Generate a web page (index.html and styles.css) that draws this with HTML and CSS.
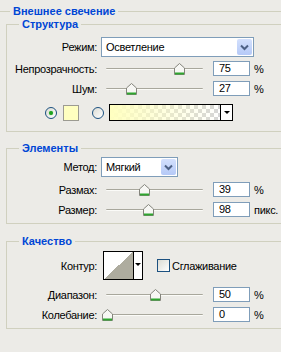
FILE: index.html
```html
<!DOCTYPE html>
<html lang="ru">
<head>
<meta charset="utf-8">
<title>Внешнее свечение</title>
<link rel="stylesheet" href="styles.css">
</head>
<body>
<fieldset class="outer">
  <legend class="legend-outer">Внешнее свечение</legend>

  <fieldset class="group group-structure">
    <legend>Структура</legend>
    <div class="row row-select row-first">
      <span class="label">Режим:</span>
      <div class="select select-wide">
        <span class="select-text">Осветление</span>
        <span class="select-btn"><svg width="15" height="16" viewBox="0 0 15 16"><path d="M4 6.5 L7.5 10 L11 6.5" fill="none" stroke="#4d6185" stroke-width="2"/></svg></span>
      </div>
    </div>
    <div class="row row-slider gap4">
      <span class="label">Непрозрачность:</span>
      <div class="slider">
        <div class="track"></div>
        <div class="rail"><svg class="thumb" style="left:75%" width="11" height="12" viewBox="0 0 11 12"><path d="M0.5 5 L5.5 0.5 L10.5 5 V11.5 H0.5 Z" fill="#f7f7f4" stroke="#84847c"/><rect x="1" y="9.5" width="9" height="2" fill="#2fa52f"/></svg></div>
      </div>
      <div class="num">75</div><span class="unit">%</span>
    </div>
    <div class="row row-slider gap5">
      <span class="label">Шум:</span>
      <div class="slider">
        <div class="track"></div>
        <div class="rail"><svg class="thumb" style="left:25%" width="11" height="12" viewBox="0 0 11 12"><path d="M0.5 5 L5.5 0.5 L10.5 5 V11.5 H0.5 Z" fill="#f7f7f4" stroke="#84847c"/><rect x="1" y="9.5" width="9" height="2" fill="#2fa52f"/></svg></div>
      </div>
      <div class="num">27</div><span class="unit">%</span>
    </div>
    <div class="row row-color">
      <span class="radio radio-on"></span>
      <span class="swatch"></span>
      <span class="radio radio-second"></span>
      <div class="gradient">
        <span class="gradient-fill"></span>
        <span class="gradient-btn"><span class="tri"></span></span>
      </div>
    </div>
  </fieldset>

  <fieldset class="group group-elements">
    <legend>Элементы</legend>
    <div class="row row-select row-method">
      <span class="label">Метод:</span>
      <div class="select select-narrow">
        <span class="select-text">Мягкий</span>
        <span class="select-btn"><svg width="15" height="16" viewBox="0 0 15 16"><path d="M4 6.5 L7.5 10 L11 6.5" fill="none" stroke="#4d6185" stroke-width="2"/></svg></span>
      </div>
    </div>
    <div class="row row-slider gap5">
      <span class="label">Размах:</span>
      <div class="slider">
        <div class="track"></div>
        <div class="rail"><svg class="thumb" style="left:39%" width="11" height="12" viewBox="0 0 11 12"><path d="M0.5 5 L5.5 0.5 L10.5 5 V11.5 H0.5 Z" fill="#f7f7f4" stroke="#84847c"/><rect x="1" y="9.5" width="9" height="2" fill="#2fa52f"/></svg></div>
      </div>
      <div class="num">39</div><span class="unit">%</span>
    </div>
    <div class="row row-slider gap5">
      <span class="label">Размер:</span>
      <div class="slider">
        <div class="track"></div>
        <div class="rail"><svg class="thumb" style="left:43%" width="11" height="12" viewBox="0 0 11 12"><path d="M0.5 5 L5.5 0.5 L10.5 5 V11.5 H0.5 Z" fill="#f7f7f4" stroke="#84847c"/><rect x="1" y="9.5" width="9" height="2" fill="#2fa52f"/></svg></div>
      </div>
      <div class="num">98</div><span class="unit">пикс.</span>
    </div>
  </fieldset>

  <fieldset class="group group-quality">
    <legend>Качество</legend>
    <div class="row row-contour">
      <span class="label">Контур:</span>
      <div class="contour">
        <span class="contour-swatch"></span>
        <span class="contour-btn"><span class="tri"></span></span>
      </div>
      <span class="checkbox"></span>
      <span class="check-label">Сглаживание</span>
    </div>
    <div class="row row-slider gap7">
      <span class="label">Диапазон:</span>
      <div class="slider">
        <div class="track"></div>
        <div class="rail"><svg class="thumb" style="left:50%" width="11" height="12" viewBox="0 0 11 12"><path d="M0.5 5 L5.5 0.5 L10.5 5 V11.5 H0.5 Z" fill="#f7f7f4" stroke="#84847c"/><rect x="1" y="9.5" width="9" height="2" fill="#2fa52f"/></svg></div>
      </div>
      <div class="num">50</div><span class="unit">%</span>
    </div>
    <div class="row row-slider gap5">
      <span class="label">Колебание:</span>
      <div class="slider">
        <div class="track"></div>
        <div class="rail"><svg class="thumb" style="left:0%" width="11" height="12" viewBox="0 0 11 12"><path d="M0.5 5 L5.5 0.5 L10.5 5 V11.5 H0.5 Z" fill="#f7f7f4" stroke="#84847c"/><rect x="1" y="9.5" width="9" height="2" fill="#2fa52f"/></svg></div>
      </div>
      <div class="num">0</div><span class="unit">%</span>
    </div>
  </fieldset>
</fieldset>
</body>
</html>
```

FILE: styles.css
```css
html, body {
  margin: 0;
  padding: 0;
}
body {
  background: #ecebe7;
  width: 281px;
  height: 352px;
  overflow: hidden;
  font-family: "Liberation Sans", Arial, sans-serif;
  font-size: 11px;
  letter-spacing: -0.3px;
  color: #000;
}
fieldset {
  margin: 0;
  padding: 0;
  min-width: 0;
  border: 1px solid #d0d0bf;
}
legend {
  padding: 0 3px;
  font-weight: bold;
  font-size: 11px;
  line-height: 13px;
  letter-spacing: 0;
  color: #0046d5;
  margin-left: 12px;
}
.outer {
  margin: 5px 0 0 0;
  border-left: none;
  border-right: none;
  border-bottom: none;
}
.outer > .legend-outer {
  margin-left: 10px;
}
.group {
  margin-left: 6px;
  border-right: none;
}
.group-structure { padding-bottom: 10px; }
.group-elements { margin-top: 10px; padding-bottom: 6px; }
.group-quality { margin-top: 11px; padding-bottom: 6px; }

.row {
  display: flex;
  align-items: center;
}
.label {
  flex: none;
  width: 90px;
  text-align: right;
  white-space: nowrap;
}
.row-select { height: 20px; }
.row-first { margin-top: 6px; }
.row-method { margin-top: 2px; }
.row-slider { height: 15px; }
.gap4 { margin-top: 4px; }
.gap5 { margin-top: 5px; }
.gap7 { margin-top: 7px; }

/* select */
.select {
  box-sizing: border-box;
  height: 20px;
  margin-left: 4px;
  border: 1px solid #7f9db9;
  background: #fff;
  display: flex;
  align-items: center;
}
.select-wide { width: 153px; }
.select-narrow { width: 77px; }
.select-text {
  flex: 1;
  padding-left: 4px;
  white-space: nowrap;
  overflow: hidden;
}
.select-btn {
  flex: none;
  width: 15px;
  height: 16px;
  margin-right: 1px;
  border-radius: 2px;
  background: linear-gradient(to bottom, #d3e0fd, #b5c9f7);
  display: flex;
}

/* slider */
.slider {
  position: relative;
  flex: none;
  width: 112px;
  height: 15px;
  margin-left: 4px;
}
.track {
  margin: 7px 0 0 5px;
  width: 97px;
  height: 1px;
  border-top: 1px solid #a8a79c;
  border-radius: 1px;
  background: #fbfbf8;
}
.rail {
  position: absolute;
  left: 6px;
  top: 0;
  width: 96px;
  height: 15px;
}
.thumb {
  position: absolute;
  top: 2px;
  margin-left: -5px;
}
.num {
  flex: none;
  box-sizing: border-box;
  width: 37px;
  height: 15px;
  border: 1px solid #7f9db9;
  background: #fff;
  padding-left: 5px;
  line-height: 13px;
}
.unit {
  margin-left: 4px;
  white-space: nowrap;
}

/* colour row */
.row-color {
  margin-top: 8px;
  height: 17px;
  padding-left: 38px;
}
.radio {
  flex: none;
  box-sizing: border-box;
  width: 12px;
  height: 12px;
  border: 1px solid #1c5180;
  border-radius: 50%;
  background: linear-gradient(135deg, #dcdcd4, #ffffff);
  display: flex;
  align-items: center;
  justify-content: center;
}
.radio-on::after {
  content: "";
  width: 4px;
  height: 4px;
  border-radius: 50%;
  background: #21a121;
  box-shadow: 0 0 1px #5fd15f;
}
.radio-second { margin-left: 13px; }
.swatch {
  flex: none;
  box-sizing: border-box;
  width: 16px;
  height: 16px;
  margin-left: 6px;
  border: 1px solid #9c9b92;
  background: #ffffc0;
}
.gradient {
  flex: none;
  box-sizing: border-box;
  width: 124px;
  height: 17px;
  margin-left: 5px;
  border: 1px solid #000;
  display: flex;
}
.gradient-fill {
  flex: 1;
  background:
    linear-gradient(to right, #ffffc0, rgba(255, 255, 192, 0)),
    conic-gradient(#d6d6d6 25%, #fff 0 50%, #d6d6d6 0 75%, #fff 0) 0 0 / 8px 8px;
}
.gradient-btn {
  flex: none;
  width: 11px;
  border-left: 1px solid #000;
  background: #fff;
  display: flex;
  align-items: center;
  justify-content: center;
}
.tri {
  width: 0;
  height: 0;
  border-left: 3px solid transparent;
  border-right: 3px solid transparent;
  border-top: 3px solid #000;
}

/* contour row */
.row-contour {
  margin-top: 3px;
  height: 29px;
}
.contour {
  flex: none;
  box-sizing: border-box;
  width: 40px;
  height: 29px;
  margin-left: 6px;
  border: 1px solid #000;
  display: flex;
}
.contour-swatch {
  flex: none;
  width: 29px;
  background: linear-gradient(to bottom right, #fff 50%, #aeac9f 50%);
}
.contour-btn {
  flex: 1;
  border-left: 1px solid #000;
  background: #fff;
  display: flex;
  align-items: center;
  justify-content: center;
  padding-bottom: 3px;
}
.checkbox {
  flex: none;
  box-sizing: border-box;
  width: 13px;
  height: 13px;
  margin-left: 14px;
  border: 1px solid #1c5180;
  background: linear-gradient(135deg, #dcdcd4, #ffffff);
}
.check-label {
  margin-left: 2px;
  white-space: nowrap;
}
```
